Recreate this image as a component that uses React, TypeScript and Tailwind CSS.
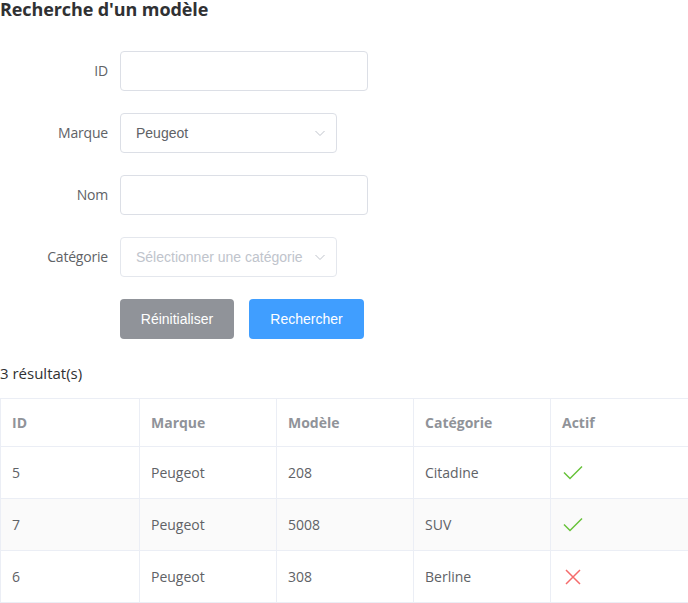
import React from "react";

const rows = [
  { id: 5, marque: "Peugeot", modele: "208", cat: "Citadine", actif: true },
  { id: 7, marque: "Peugeot", modele: "5008", cat: "SUV", actif: true },
  { id: 6, marque: "Peugeot", modele: "308", cat: "Berline", actif: false },
];

const Chevron = () => (
  <svg width="12" height="12" viewBox="0 0 12 12" fill="none" className="text-[#c0c4cc]">
    <path d="M1.5 4 L6 8.5 L10.5 4" stroke="currentColor" strokeWidth="1" />
  </svg>
);

const Check = () => (
  <svg width="22" height="16" viewBox="0 0 22 16" fill="none">
    <path d="M2 7.5 L8 13.5 L20 1.5" stroke="#67c23a" strokeWidth="1.5" />
  </svg>
);

const Cross = () => (
  <svg width="16" height="16" viewBox="0 0 16 16" fill="none">
    <path d="M1 1 L15 15 M15 1 L1 15" stroke="#f56c6c" strokeWidth="1.5" />
  </svg>
);

function Label({ children }: { children: React.ReactNode }) {
  return (
    <div className="w-[120px] pr-3 text-right text-[14px] text-[#606266] leading-[40px] [font-family:'Open_Sans',sans-serif] tracking-[-0.2px]">
      {children}
    </div>
  );
}

export default function App() {
  return (
    <div className="w-[688px] h-[603px] bg-white overflow-hidden">
      <h2 className="text-[18px] font-bold leading-[19px] text-[#303133] [font-family:'Open_Sans',sans-serif] tracking-[-0.1px]">
        Recherche d'un modèle
      </h2>
      <div className="mt-[32px] flex flex-col gap-[22px]">
        <div className="flex">
          <Label>ID</Label>
          <div className="w-[248px] h-[40px] border border-[#dcdfe6] rounded-[4px]" />
        </div>
        <div className="flex">
          <Label>Marque</Label>
          <div className="w-[217px] h-[40px] border border-[#dcdfe6] rounded-[4px] flex items-center justify-between pl-[15px] pr-[10px] text-[14px] text-[#606266] [font-family:'Liberation_Sans',Arial,sans-serif]">
            <span>Peugeot</span>
            <Chevron />
          </div>
        </div>
        <div className="flex">
          <Label>Nom</Label>
          <div className="w-[248px] h-[40px] border border-[#dcdfe6] rounded-[4px]" />
        </div>
        <div className="flex">
          <Label>Catégorie</Label>
          <div className="w-[217px] h-[40px] border border-[#e4e7ed] rounded-[4px] flex items-center justify-between pl-[15px] pr-[10px] text-[14px] text-[#c0c4cc] [font-family:'Liberation_Sans',Arial,sans-serif]">
            <span className="whitespace-nowrap overflow-hidden">Sélectionner une catégorie</span>
            <Chevron />
          </div>
        </div>
        <div className="flex pl-[120px] gap-[15px] [font-family:'Liberation_Sans',Arial,sans-serif] text-[14px] text-white">
          <button className="w-[114px] h-[40px] rounded-[4px] bg-[#909399]">Réinitialiser</button>
          <button className="w-[115px] h-[40px] rounded-[4px] bg-[#409eff]">Rechercher</button>
        </div>
      </div>
      <div className="mt-[24px] text-[15px] leading-[20px] text-[#303133] [font-family:'Open_Sans',sans-serif]">
        3 résultat(s)
      </div>
      <table className="mt-[15px] w-[688px] table-fixed border-collapse [font-family:'Open_Sans',sans-serif] text-[14px]">
        <colgroup>
          <col className="w-[139px]" />
          <col className="w-[137px]" />
          <col className="w-[137px]" />
          <col className="w-[137px]" />
          <col className="w-[138px]" />
        </colgroup>
        <thead>
          <tr className="h-[48px]">
            {["ID", "Marque", "Modèle", "Catégorie", "Actif"].map((h) => (
              <th key={h} className="border border-[#ebeef5] text-left pl-[11px] font-bold text-[#909399]">
                {h}
              </th>
            ))}
          </tr>
        </thead>
        <tbody>
          {rows.map((r, i) => (
            <tr key={r.id} className={"h-[52px] " + (i === 1 ? "bg-[#fafafa]" : "bg-white")}>
              <td className="border border-[#ebeef5] pl-[11px] text-[#606266]">{r.id}</td>
              <td className="border border-[#ebeef5] pl-[11px] text-[#606266]">{r.marque}</td>
              <td className="border border-[#ebeef5] pl-[11px] text-[#606266]">{r.modele}</td>
              <td className="border border-[#ebeef5] pl-[11px] text-[#606266]">{r.cat}</td>
              <td className="border border-[#ebeef5] pl-[11px]">
                <div className="flex items-center">{r.actif ? <Check /> : <span className="pl-[3px]"><Cross /></span>}</div>
              </td>
            </tr>
          ))}
        </tbody>
      </table>
    </div>
  );
}
